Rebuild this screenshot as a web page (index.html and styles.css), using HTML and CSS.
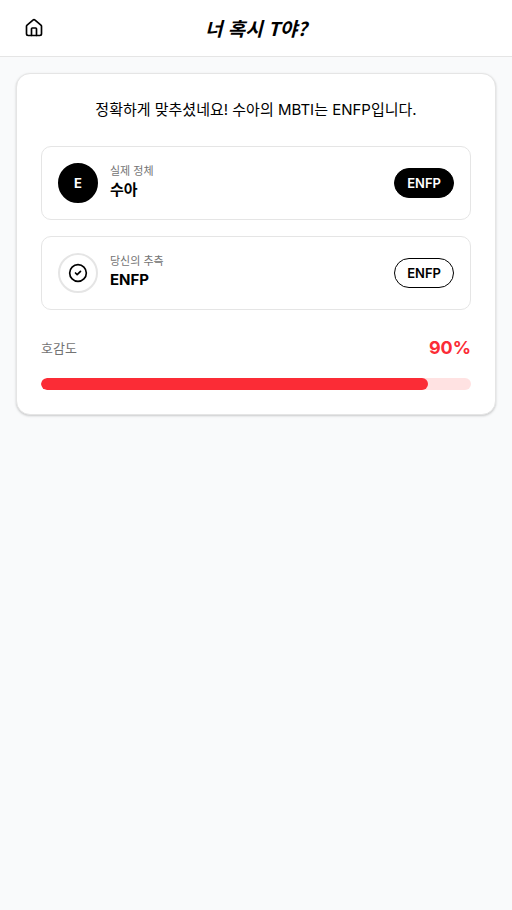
FILE: index.html
```html
<!DOCTYPE html>
<html lang="ko">
<head>
<meta charset="utf-8">
<meta name="viewport" content="width=device-width, initial-scale=1">
<title>너 혹시 T야?</title>
<link rel="stylesheet" href="styles.css">
</head>
<body>
<header class="topbar">
  <button class="home" type="button" aria-label="홈">
    <svg width="20" height="20" viewBox="0 0 24 24" fill="none" stroke="currentColor" stroke-width="2" stroke-linecap="round" stroke-linejoin="round"><path d="M15 21v-8a1 1 0 0 0-1-1h-4a1 1 0 0 0-1 1v8"/><path d="M3 10a2 2 0 0 1 .709-1.528l7-5.999a2 2 0 0 1 2.582 0l7 5.999A2 2 0 0 1 21 10v9a2 2 0 0 1-2 2H5a2 2 0 0 1-2-2z"/></svg>
  </button>
  <h1 class="title">너 혹시 T야?</h1>
</header>
<main class="content">
  <section class="card">
    <p class="message">정확하게 맞추셨네요! 수아의 MBTI는 ENFP입니다.</p>
    <div class="row">
      <span class="avatar avatar-solid">E</span>
      <div class="info">
        <span class="label">실제 정체</span>
        <span class="name">수아</span>
      </div>
      <span class="badge badge-solid">ENFP</span>
    </div>
    <div class="row">
      <span class="avatar">
        <svg width="20" height="20" viewBox="0 0 24 24" fill="none" stroke="currentColor" stroke-width="2" stroke-linecap="round" stroke-linejoin="round"><circle cx="12" cy="12" r="10"/><path d="m9 12 2 2 4-4"/></svg>
      </span>
      <div class="info">
        <span class="label">당신의 추측</span>
        <span class="name">ENFP</span>
      </div>
      <span class="badge">ENFP</span>
    </div>
    <div class="score">
      <div class="score-head">
        <span class="score-label" id="score-label">호감도</span>
        <span class="score-value">90%</span>
      </div>
      <div class="track" role="progressbar" aria-labelledby="score-label" aria-valuenow="90" aria-valuemin="0" aria-valuemax="100">
        <div class="fill" style="width: 90%"></div>
      </div>
    </div>
  </section>
</main>
</body>
</html>
```
FILE: styles.css
```css
* {
  box-sizing: border-box;
}

body {
  margin: 0;
  min-height: 100vh;
  background: #f9fafb;
  color: #000;
  font-family: Inter, "Noto Sans CJK KR", sans-serif;
  font-size: 15px;
  line-height: 24px;
}

svg {
  display: block;
}

.topbar {
  display: grid;
  grid-template-columns: 36px 1fr 36px;
  align-items: center;
  height: 57px;
  padding: 0 16px;
  background: #fff;
  border-bottom: 1px solid #e5e5e5;
}

.home {
  display: flex;
  align-items: center;
  justify-content: center;
  height: 36px;
  padding: 0;
  border: 0;
  background: none;
  color: inherit;
}

.title {
  margin: 0;
  font-family: "Noto Sans CJK KR", sans-serif;
  font-size: 19px;
  line-height: 28px;
  font-weight: 700;
  font-style: italic;
  text-align: center;
}

.content {
  padding: 16px;
}

.card {
  display: flex;
  flex-direction: column;
  gap: 16px;
  padding: 24px;
  background: #fff;
  border: 1px solid #e5e5e5;
  border-radius: 14px;
  box-shadow: 0 1px 3px rgba(0, 0, 0, 0.1), 0 1px 2px rgba(0, 0, 0, 0.1);
}

.message {
  margin: 0 0 8px;
  font-weight: 400;
  text-align: center;
}

.row {
  display: flex;
  align-items: center;
  gap: 12px;
  padding: 16px;
  border: 1px solid #e5e5e5;
  border-radius: 10px;
}

.avatar {
  display: flex;
  align-items: center;
  justify-content: center;
  width: 40px;
  height: 40px;
  border: 2px solid #e5e5e5;
  border-radius: 50%;
  font-size: 13px;
  font-weight: 700;
}

.avatar-solid {
  background: #000;
  border-color: #000;
  color: #fff;
}

.info {
  display: flex;
  flex: 1;
  flex-direction: column;
}

.label {
  color: #737373;
  font-size: 11px;
  line-height: 14px;
}

.name {
  font-weight: 700;
  line-height: 24px;
}

.badge {
  padding: 4px 12px;
  border: 1px solid #000;
  border-radius: 15px;
  font-size: 13px;
  line-height: 20px;
  font-weight: 600;
}

.badge-solid {
  background: #000;
  color: #fff;
}

.score {
  padding-top: 8px;
}

.score-head {
  display: flex;
  align-items: center;
  justify-content: space-between;
  margin-bottom: 16px;
}

.score-label {
  color: #737373;
  font-size: 13px;
}

.score-value {
  color: #fb2c36;
  font-size: 18px;
  line-height: 28px;
  font-weight: 700;
}

.track {
  height: 12px;
  overflow: hidden;
  background: #ffe2e2;
  border-radius: 6px;
}

.fill {
  height: 100%;
  background: #fb2c36;
  border-radius: 6px;
}
```
